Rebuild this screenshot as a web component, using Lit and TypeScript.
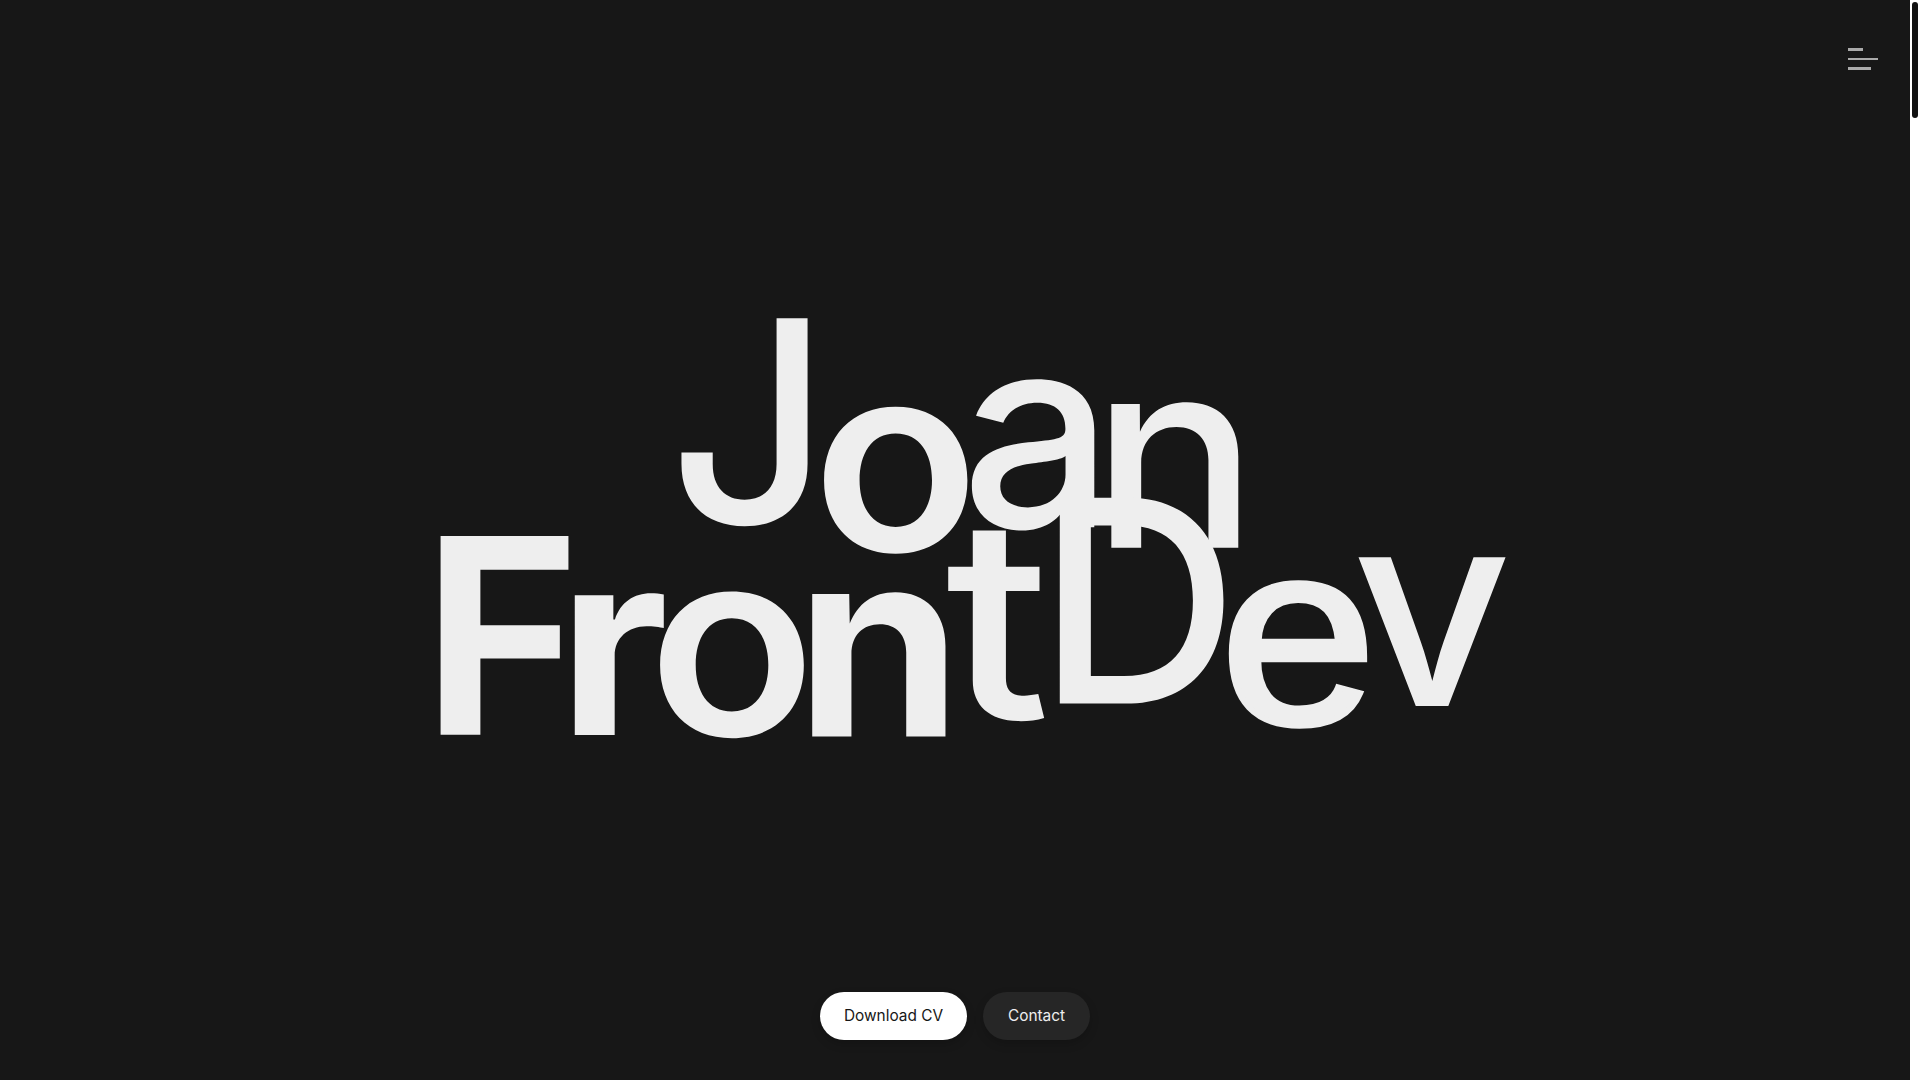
import { LitElement, html, css } from "lit";
import { customElement } from "lit/decorators.js";

type Glyph = {
  c: string;
  w: number;
  box: [number, number, number, number];
  f?: string;
  stroke?: number;
};

const INTER = "Inter";
const ARIAL = "Liberation Sans";
const LINES: Glyph[][] = [
  [
    { c: "J", w: 500, box: [678.4, 317.3, 809.4, 529] },
    { c: "o", w: 620, box: [820.4, 405, 970.6, 555.7] },
    { c: "a", w: 500, box: [969.8, 378, 1095.9, 532.7] },
    { c: "n", w: 500, box: [1109, 400.7, 1239.2, 548.7] },
  ],
  [
    { c: "F", w: 700, box: [439.6, 534, 569, 734.7] },
    { c: "r", w: 650, box: [575.1, 592.7, 664.5, 736.7] },
    { c: "o", w: 620, box: [656.3, 589.3, 806.9, 739.7] },
    { c: "n", w: 650, box: [812.2, 590, 946.1, 737] },
    { c: "t", w: 500, box: [944.9, 527, 1046.1, 723.3] },
    { c: "D", w: 500, box: [1058.8, 496, 1224.5, 703.7] },
    { c: "e", w: 400, f: ARIAL, stroke: 6, box: [1225.7, 577.7, 1367.8, 730] },
    { c: "v", w: 500, box: [1357.1, 557, 1509, 706] },
  ],
];

@customElement("app-root")
export class AppRoot extends LitElement {
  static styles = css`
    :host {
      display: flex;
      width: 100%;
      height: 100vh;
      overflow: hidden;
      background: #fff;
      font-family: "Inter", "Liberation Sans", sans-serif;
    }
    .page {
      flex: 1;
      display: flex;
      flex-direction: column;
      background: #171717;
      color: #eee;
    }
    .top {
      display: flex;
      justify-content: flex-end;
      padding: 48px 32px 0 0;
    }
    .menu {
      display: block;
      width: 30px;
      height: 22px;
    }
    .hero {
      flex: 1;
      display: flex;
      flex-direction: column;
      justify-content: center;
      margin: 0;
      font-size: 280px;
      font-weight: 500;
      line-height: 1;
    }
    .line {
      display: flex;
      justify-content: center;
    }
    .ch {
      display: block;
      line-height: 1;
      transform-origin: 0 0;
      white-space: pre;
    }
    .actions {
      display: flex;
      justify-content: center;
      gap: 16px;
      padding-bottom: 40px;
    }
    .btn {
      display: flex;
      align-items: center;
      justify-content: center;
      height: 48px;
      padding: 0 0 2px;
      border-radius: 24px;
      border: 0;
      font: 400 15.4px "Inter", "Liberation Sans", sans-serif;
      box-shadow: 0 4px 10px rgba(0, 0, 0, 0.18);
    }
    .primary {
      width: 147px;
      background: #fff;
      color: #171717;
    }
    .ghost {
      width: 107px;
      background: #262626;
      color: #eee;
    }
    .scroll {
      width: 10px;
      padding: 2px;
      box-sizing: border-box;
      background: #fff;
    }
    .thumb {
      height: 116px;
      border-radius: 3px;
      background: #111;
    }
  `;

  firstUpdated() {
    const ctx = document.createElement("canvas").getContext("2d")!;
    const spans = Array.from(this.renderRoot.querySelectorAll<HTMLElement>(".ch"));
    const glyphs = LINES.flat();
    const REF = 1000;
    const fam = (g: Glyph) => `"${g.f ?? INTER}"`;
    // a stroked glyph grows by half its stroke on every side, so its outline box is shrunk first
    const inner = (g: Glyph) => {
      const s = (g.stroke ?? 0) / 2;
      return [g.box[0] + s, g.box[1] + s, g.box[2] - s, g.box[3] - s];
    };
    glyphs.forEach((g, i) => {
      ctx.font = `${g.w} ${REF}px ${fam(g)}`;
      const m = ctx.measureText(g.c);
      const h = m.actualBoundingBoxAscent + m.actualBoundingBoxDescent;
      const [, y0, , y1] = inner(g);
      spans[i].style.fontSize = `${((y1 - y0) * REF) / h}px`;
    });
    const rects = spans.map((s) => s.getBoundingClientRect());
    glyphs.forEach((g, i) => {
      const size = parseFloat(spans[i].style.fontSize);
      ctx.font = `${g.w} ${size}px ${fam(g)}`;
      const m = ctx.measureText(g.c);
      const [x0, y0, x1] = inner(g);
      const sx = (x1 - x0) / (m.actualBoundingBoxLeft + m.actualBoundingBoxRight);
      const baseline =
        (size - (m.fontBoundingBoxAscent + m.fontBoundingBoxDescent)) / 2 + m.fontBoundingBoxAscent;
      const tx = x0 - rects[i].left + sx * m.actualBoundingBoxLeft;
      const ty = y0 - rects[i].top - (baseline - m.actualBoundingBoxAscent);
      spans[i].style.transform = `translate(${tx}px, ${ty}px) scaleX(${sx})`;
    });
  }

  render() {
    return html`
      <div class="page">
        <header class="top">
          <svg class="menu" viewBox="0 0 30 22" aria-label="Menu">
            <rect x="0" y="0" width="15" height="3" fill="#aaa"></rect>
            <rect x="0" y="10" width="30" height="2" fill="#aaa"></rect>
            <rect x="0" y="19" width="23" height="3" fill="#aaa"></rect>
          </svg>
        </header>
        <h1 class="hero">
          ${LINES.map(
            (line) => html`<div class="line">
              ${line.map(
                (g) =>
                  html`<span
                    class="ch"
                    style="font-family:'${g.f ?? INTER}',sans-serif;font-weight:${g.w};-webkit-text-stroke:${g.stroke ?? 0}px #eee"
                    >${g.c}</span
                  >`
              )}
            </div>`
          )}
        </h1>
        <div class="actions">
          <button class="btn primary">Download CV</button>
          <button class="btn ghost">Contact</button>
        </div>
      </div>
      <div class="scroll"><div class="thumb"></div></div>
    `;
  }
}
